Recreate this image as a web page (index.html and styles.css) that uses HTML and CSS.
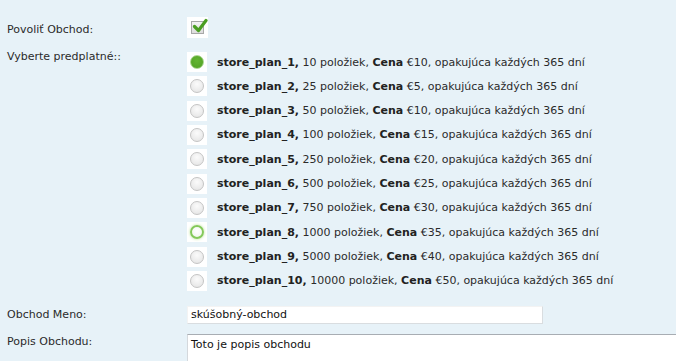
FILE: index.html
```html
<!DOCTYPE html>
<html lang="sk">
<head>
    <meta charset="UTF-8">
    <title>Obchod</title>
    <link rel="stylesheet" href="styles.css">
</head>
<body>
    <div class="form">
        <div class="row row_enable">
            <div class="label">Povoliť Obchod:</div>
            <div class="control">
                <span class="check">
                    <span class="check_box"></span>
                    <svg class="check_mark" width="16" height="16" viewBox="0 0 16 16">
                        <path d="M2.5 8.5 L6.5 12.5 L14 2.5" fill="none" stroke="#4a9e22" stroke-width="3.2" stroke-linecap="round" stroke-linejoin="round"/>
                    </svg>
                </span>
            </div>
        </div>

        <div class="row row_plans">
            <div class="label">Vyberte predplatné::</div>
            <div class="control plans">
                <div class="plan"><span class="radio selected"><i></i></span><span><b>store_plan_1,</b> 10 položiek, <b>Cena</b> €10, opakujúca každých 365 dní</span></div>
                <div class="plan"><span class="radio"><i></i></span><span><b>store_plan_2,</b> 25 položiek, <b>Cena</b> €5, opakujúca každých 365 dní</span></div>
                <div class="plan"><span class="radio"><i></i></span><span><b>store_plan_3,</b> 50 položiek, <b>Cena</b> €10, opakujúca každých 365 dní</span></div>
                <div class="plan"><span class="radio"><i></i></span><span><b>store_plan_4,</b> 100 položiek, <b>Cena</b> €15, opakujúca každých 365 dní</span></div>
                <div class="plan"><span class="radio"><i></i></span><span><b>store_plan_5,</b> 250 položiek, <b>Cena</b> €20, opakujúca každých 365 dní</span></div>
                <div class="plan"><span class="radio"><i></i></span><span><b>store_plan_6,</b> 500 položiek, <b>Cena</b> €25, opakujúca každých 365 dní</span></div>
                <div class="plan"><span class="radio"><i></i></span><span><b>store_plan_7,</b> 750 položiek, <b>Cena</b> €30, opakujúca každých 365 dní</span></div>
                <div class="plan"><span class="radio hover"><i></i></span><span><b>store_plan_8,</b> 1000 položiek, <b>Cena</b> €35, opakujúca každých 365 dní</span></div>
                <div class="plan"><span class="radio"><i></i></span><span><b>store_plan_9,</b> 5000 položiek, <b>Cena</b> €40, opakujúca každých 365 dní</span></div>
                <div class="plan"><span class="radio"><i></i></span><span><b>store_plan_10,</b> 10000 položiek, <b>Cena</b> €50, opakujúca každých 365 dní</span></div>
            </div>
        </div>

        <div class="row row_name">
            <div class="label">Obchod Meno:</div>
            <div class="control">
                <input class="text_input" type="text" value="skúšobný-obchod">
            </div>
        </div>

        <div class="row row_desc">
            <div class="label">Popis Obchodu:</div>
            <div class="control">
                <textarea class="text_area">Toto je popis obchodu</textarea>
            </div>
        </div>
    </div>
</body>
</html>
```

FILE: styles.css
```css
*{
    box-sizing: border-box;
}
body{
    margin: 0;
    background-color: #e7f2f8;
    font-family: "DejaVu Sans", Verdana, sans-serif;
    font-size: 11px;
    color: #2b2b2b;
    overflow: hidden;
}
.form{
    padding: 17px 0 0 0;
}
.row{
    display: flex;
}
.label{
    /* 左邊的標籤欄，不讓它被壓縮 */
    flex: 0 0 187px;
    padding: 0 0 0 7px;
    line-height: 13px;
}
.control{
    flex: 1;
    min-width: 0;
}

/* 第一列 checkbox */
.row_enable .label{
    margin: 6px 0 0 0;
}
.check{
    display: block;
    position: relative;
    width: 21px;
    height: 21px;
    background-color: #fff;
}
.check_box{
    position: absolute;
    left: 4px;
    top: 4px;
    width: 13px;
    height: 13px;
    border: 1px solid #a8a8a8;
    background: linear-gradient(#f4f4f4, #dcdcdc);
}
.check_mark{
    position: absolute;
    left: 5px;
    top: 1px;
}

/* 方案清單 */
.row_plans{
    margin: 9px 0 0 0;
}
.row_plans .label{
    padding-top: 3px;
}
.plans{
    padding: 5px 0 0 0;
    display: flex;
    flex-direction: column;
    gap: 4.33px;
}
.plan{
    display: flex;
    align-items: center;
    height: 20px;
    white-space: nowrap;
}
.plan b{
    color: #222;
}
.radio{
    display: flex;
    justify-content: center;
    align-items: center;
    width: 20px;
    height: 20px;
    background-color: #fff;
    margin: 0 10px 0 0;
}
.radio i{
    width: 14px;
    height: 14px;
    border-radius: 50%;
    border: 1px solid #c4c4c4;
    background: radial-gradient(circle at 50% 35%, #fbfbfb, #e2e2e2);
}
.radio.selected i{
    border: 1px solid #a9d68e;
    background: radial-gradient(circle at 50% 40%, #62b531, #4f9f23);
}
.radio.hover i{
    border: 2px solid #84c95a;
    background: radial-gradient(circle at 50% 40%, #fff, #eef5ea);
    box-shadow: 0 0 3px #b5e08f;
}

/* 文字輸入 */
.row_name{
    margin: 15px 0 0 0;
}
.row_name .label{
    margin: 2px 0 0 0;
}
.text_input{
    display: block;
    width: 356px;
    height: 18px;
    margin: 0;
    padding: 0 3px;
    border: 1px solid #f3f3f3;
    border-right-color: #d9dde0;
    border-bottom-color: #d9dde0;
    background-color: #fff;
    font-family: "DejaVu Sans", Verdana, sans-serif;
    font-size: 11px;
    color: #111;
    outline: none;
}
.row_desc{
    margin: 10px 0 0 0;
}
.row_desc .label{
    margin: 1px 0 0 0;
}
.text_area{
    /* 寬度超出畫面右邊，跟原圖一樣被切掉 */
    display: block;
    width: 520px;
    height: 28px;
    margin: 0;
    padding: 3px 3px;
    border: 1px solid #d4d8dc;
    border-top-color: #a8adb3;
    border-bottom: none;
    background-color: #fff;
    font-family: "DejaVu Sans", Verdana, sans-serif;
    font-size: 11px;
    color: #111;
    resize: none;
    outline: none;
    overflow: hidden;
}
```
